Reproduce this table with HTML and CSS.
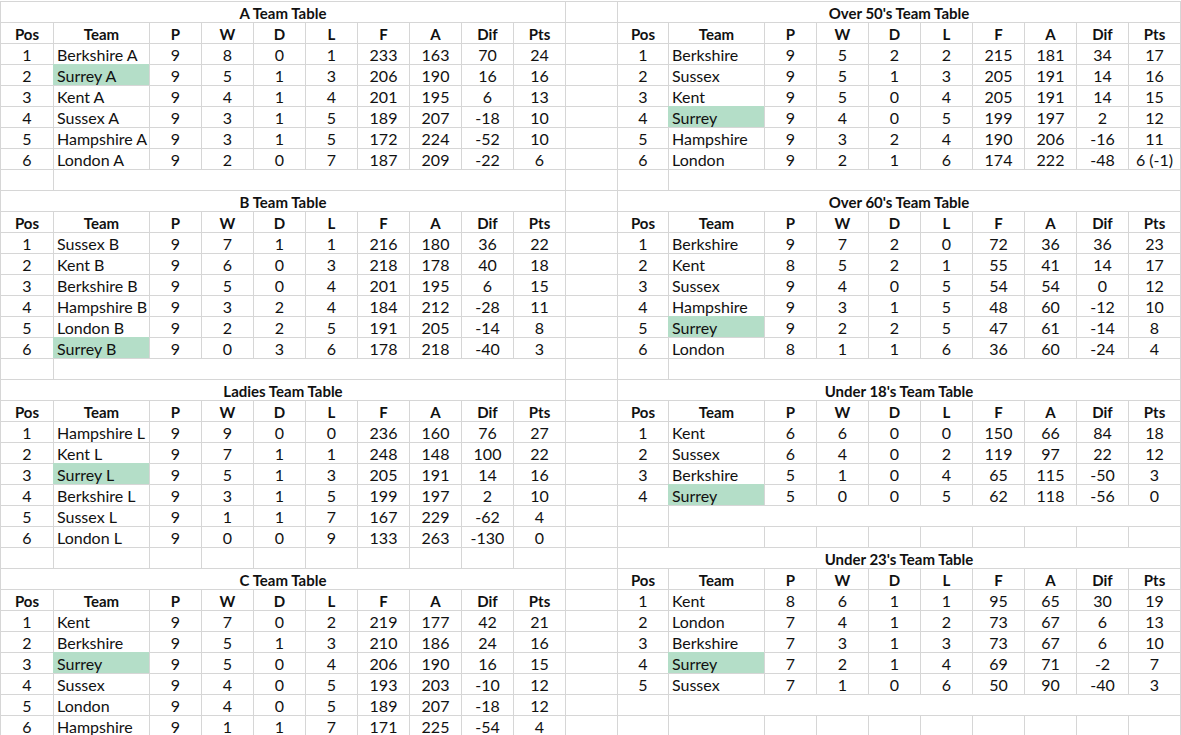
FILE: index.html
```html
<!DOCTYPE html>
<html lang="en">
<head>
<meta charset="utf-8">
<title>League Tables</title>
<link rel="stylesheet" href="styles.css">
</head>
<body>
<main class="sheet">
  <section class="side left">
    <div class="ttl">A Team Table</div>
    <div class="h">Pos</div><div class="h">Team</div><div class="h">P</div><div class="h">W</div><div class="h">D</div><div class="h">L</div><div class="h">F</div><div class="h">A</div><div class="h">Dif</div><div class="h">Pts</div>
    <div class="n">1</div><div class="t">Berkshire A</div><div class="n">9</div><div class="n">8</div><div class="n">0</div><div class="n">1</div><div class="n">233</div><div class="n">163</div><div class="n">70</div><div class="n">24</div>
    <div class="n">2</div><div class="t g">Surrey A</div><div class="n">9</div><div class="n">5</div><div class="n">1</div><div class="n">3</div><div class="n">206</div><div class="n">190</div><div class="n">16</div><div class="n">16</div>
    <div class="n">3</div><div class="t">Kent A</div><div class="n">9</div><div class="n">4</div><div class="n">1</div><div class="n">4</div><div class="n">201</div><div class="n">195</div><div class="n">6</div><div class="n">13</div>
    <div class="n">4</div><div class="t">Sussex A</div><div class="n">9</div><div class="n">3</div><div class="n">1</div><div class="n">5</div><div class="n">189</div><div class="n">207</div><div class="n">-18</div><div class="n">10</div>
    <div class="n">5</div><div class="t">Hampshire A</div><div class="n">9</div><div class="n">3</div><div class="n">1</div><div class="n">5</div><div class="n">172</div><div class="n">224</div><div class="n">-52</div><div class="n">10</div>
    <div class="n">6</div><div class="t">London A</div><div class="n">9</div><div class="n">2</div><div class="n">0</div><div class="n">7</div><div class="n">187</div><div class="n">209</div><div class="n">-22</div><div class="n">6</div>
    <div class="e"></div><div class="m"></div>

    <div class="ttl">B Team Table</div>
    <div class="h">Pos</div><div class="h">Team</div><div class="h">P</div><div class="h">W</div><div class="h">D</div><div class="h">L</div><div class="h">F</div><div class="h">A</div><div class="h">Dif</div><div class="h">Pts</div>
    <div class="n">1</div><div class="t">Sussex B</div><div class="n">9</div><div class="n">7</div><div class="n">1</div><div class="n">1</div><div class="n">216</div><div class="n">180</div><div class="n">36</div><div class="n">22</div>
    <div class="n">2</div><div class="t">Kent B</div><div class="n">9</div><div class="n">6</div><div class="n">0</div><div class="n">3</div><div class="n">218</div><div class="n">178</div><div class="n">40</div><div class="n">18</div>
    <div class="n">3</div><div class="t">Berkshire B</div><div class="n">9</div><div class="n">5</div><div class="n">0</div><div class="n">4</div><div class="n">201</div><div class="n">195</div><div class="n">6</div><div class="n">15</div>
    <div class="n">4</div><div class="t">Hampshire B</div><div class="n">9</div><div class="n">3</div><div class="n">2</div><div class="n">4</div><div class="n">184</div><div class="n">212</div><div class="n">-28</div><div class="n">11</div>
    <div class="n">5</div><div class="t">London B</div><div class="n">9</div><div class="n">2</div><div class="n">2</div><div class="n">5</div><div class="n">191</div><div class="n">205</div><div class="n">-14</div><div class="n">8</div>
    <div class="n">6</div><div class="t g">Surrey B</div><div class="n">9</div><div class="n">0</div><div class="n">3</div><div class="n">6</div><div class="n">178</div><div class="n">218</div><div class="n">-40</div><div class="n">3</div>
    <div class="e"></div><div class="m"></div>

    <div class="ttl">Ladies Team Table</div>
    <div class="h">Pos</div><div class="h">Team</div><div class="h">P</div><div class="h">W</div><div class="h">D</div><div class="h">L</div><div class="h">F</div><div class="h">A</div><div class="h">Dif</div><div class="h">Pts</div>
    <div class="n">1</div><div class="t">Hampshire L</div><div class="n">9</div><div class="n">9</div><div class="n">0</div><div class="n">0</div><div class="n">236</div><div class="n">160</div><div class="n">76</div><div class="n">27</div>
    <div class="n">2</div><div class="t">Kent L</div><div class="n">9</div><div class="n">7</div><div class="n">1</div><div class="n">1</div><div class="n">248</div><div class="n">148</div><div class="n">100</div><div class="n">22</div>
    <div class="n">3</div><div class="t g">Surrey L</div><div class="n">9</div><div class="n">5</div><div class="n">1</div><div class="n">3</div><div class="n">205</div><div class="n">191</div><div class="n">14</div><div class="n">16</div>
    <div class="n">4</div><div class="t">Berkshire L</div><div class="n">9</div><div class="n">3</div><div class="n">1</div><div class="n">5</div><div class="n">199</div><div class="n">197</div><div class="n">2</div><div class="n">10</div>
    <div class="n">5</div><div class="t">Sussex L</div><div class="n">9</div><div class="n">1</div><div class="n">1</div><div class="n">7</div><div class="n">167</div><div class="n">229</div><div class="n">-62</div><div class="n">4</div>
    <div class="n">6</div><div class="t">London L</div><div class="n">9</div><div class="n">0</div><div class="n">0</div><div class="n">9</div><div class="n">133</div><div class="n">263</div><div class="n">-130</div><div class="n">0</div>
    <div class="e"></div><div class="e"></div><div class="e"></div><div class="e"></div><div class="e"></div><div class="e"></div><div class="e"></div><div class="e"></div><div class="e"></div><div class="e"></div>

    <div class="ttl">C Team Table</div>
    <div class="h">Pos</div><div class="h">Team</div><div class="h">P</div><div class="h">W</div><div class="h">D</div><div class="h">L</div><div class="h">F</div><div class="h">A</div><div class="h">Dif</div><div class="h">Pts</div>
    <div class="n">1</div><div class="t">Kent</div><div class="n">9</div><div class="n">7</div><div class="n">0</div><div class="n">2</div><div class="n">219</div><div class="n">177</div><div class="n">42</div><div class="n">21</div>
    <div class="n">2</div><div class="t">Berkshire</div><div class="n">9</div><div class="n">5</div><div class="n">1</div><div class="n">3</div><div class="n">210</div><div class="n">186</div><div class="n">24</div><div class="n">16</div>
    <div class="n">3</div><div class="t g">Surrey</div><div class="n">9</div><div class="n">5</div><div class="n">0</div><div class="n">4</div><div class="n">206</div><div class="n">190</div><div class="n">16</div><div class="n">15</div>
    <div class="n">4</div><div class="t">Sussex</div><div class="n">9</div><div class="n">4</div><div class="n">0</div><div class="n">5</div><div class="n">193</div><div class="n">203</div><div class="n">-10</div><div class="n">12</div>
    <div class="n">5</div><div class="t">London</div><div class="n">9</div><div class="n">4</div><div class="n">0</div><div class="n">5</div><div class="n">189</div><div class="n">207</div><div class="n">-18</div><div class="n">12</div>
    <div class="n">6</div><div class="t">Hampshire</div><div class="n">9</div><div class="n">1</div><div class="n">1</div><div class="n">7</div><div class="n">171</div><div class="n">225</div><div class="n">-54</div><div class="n">4</div>
  </section>

  <section class="gap">
    <div class="e"></div><div class="e"></div><div class="e"></div><div class="e"></div><div class="e"></div><div class="e"></div><div class="e"></div>
    <div class="e"></div><div class="e"></div><div class="e"></div><div class="e"></div><div class="e"></div><div class="e"></div><div class="e"></div>
    <div class="e"></div><div class="e"></div><div class="e"></div><div class="e"></div><div class="e"></div><div class="e"></div><div class="e"></div>
    <div class="e"></div><div class="e"></div><div class="e"></div><div class="e"></div><div class="e"></div><div class="e"></div><div class="e"></div>
    <div class="e"></div><div class="e"></div><div class="e"></div><div class="e"></div><div class="e"></div><div class="e"></div><div class="e"></div>
  </section>

  <section class="side right">
    <div class="ttl">Over 50's Team Table</div>
    <div class="h">Pos</div><div class="h">Team</div><div class="h">P</div><div class="h">W</div><div class="h">D</div><div class="h">L</div><div class="h">F</div><div class="h">A</div><div class="h">Dif</div><div class="h">Pts</div>
    <div class="n">1</div><div class="t">Berkshire</div><div class="n">9</div><div class="n">5</div><div class="n">2</div><div class="n">2</div><div class="n">215</div><div class="n">181</div><div class="n">34</div><div class="n">17</div>
    <div class="n">2</div><div class="t">Sussex</div><div class="n">9</div><div class="n">5</div><div class="n">1</div><div class="n">3</div><div class="n">205</div><div class="n">191</div><div class="n">14</div><div class="n">16</div>
    <div class="n">3</div><div class="t">Kent</div><div class="n">9</div><div class="n">5</div><div class="n">0</div><div class="n">4</div><div class="n">205</div><div class="n">191</div><div class="n">14</div><div class="n">15</div>
    <div class="n">4</div><div class="t g">Surrey</div><div class="n">9</div><div class="n">4</div><div class="n">0</div><div class="n">5</div><div class="n">199</div><div class="n">197</div><div class="n">2</div><div class="n">12</div>
    <div class="n">5</div><div class="t">Hampshire</div><div class="n">9</div><div class="n">3</div><div class="n">2</div><div class="n">4</div><div class="n">190</div><div class="n">206</div><div class="n">-16</div><div class="n">11</div>
    <div class="n">6</div><div class="t">London</div><div class="n">9</div><div class="n">2</div><div class="n">1</div><div class="n">6</div><div class="n">174</div><div class="n">222</div><div class="n">-48</div><div class="n">6 (-1)</div>
    <div class="e"></div><div class="m"></div>

    <div class="ttl">Over 60's Team Table</div>
    <div class="h">Pos</div><div class="h">Team</div><div class="h">P</div><div class="h">W</div><div class="h">D</div><div class="h">L</div><div class="h">F</div><div class="h">A</div><div class="h">Dif</div><div class="h">Pts</div>
    <div class="n">1</div><div class="t">Berkshire</div><div class="n">9</div><div class="n">7</div><div class="n">2</div><div class="n">0</div><div class="n">72</div><div class="n">36</div><div class="n">36</div><div class="n">23</div>
    <div class="n">2</div><div class="t">Kent</div><div class="n">8</div><div class="n">5</div><div class="n">2</div><div class="n">1</div><div class="n">55</div><div class="n">41</div><div class="n">14</div><div class="n">17</div>
    <div class="n">3</div><div class="t">Sussex</div><div class="n">9</div><div class="n">4</div><div class="n">0</div><div class="n">5</div><div class="n">54</div><div class="n">54</div><div class="n">0</div><div class="n">12</div>
    <div class="n">4</div><div class="t">Hampshire</div><div class="n">9</div><div class="n">3</div><div class="n">1</div><div class="n">5</div><div class="n">48</div><div class="n">60</div><div class="n">-12</div><div class="n">10</div>
    <div class="n">5</div><div class="t g">Surrey</div><div class="n">9</div><div class="n">2</div><div class="n">2</div><div class="n">5</div><div class="n">47</div><div class="n">61</div><div class="n">-14</div><div class="n">8</div>
    <div class="n">6</div><div class="t">London</div><div class="n">8</div><div class="n">1</div><div class="n">1</div><div class="n">6</div><div class="n">36</div><div class="n">60</div><div class="n">-24</div><div class="n">4</div>
    <div class="e"></div><div class="m"></div>

    <div class="ttl">Under 18's Team Table</div>
    <div class="h">Pos</div><div class="h">Team</div><div class="h">P</div><div class="h">W</div><div class="h">D</div><div class="h">L</div><div class="h">F</div><div class="h">A</div><div class="h">Dif</div><div class="h">Pts</div>
    <div class="n">1</div><div class="t">Kent</div><div class="n">6</div><div class="n">6</div><div class="n">0</div><div class="n">0</div><div class="n">150</div><div class="n">66</div><div class="n">84</div><div class="n">18</div>
    <div class="n">2</div><div class="t">Sussex</div><div class="n">6</div><div class="n">4</div><div class="n">0</div><div class="n">2</div><div class="n">119</div><div class="n">97</div><div class="n">22</div><div class="n">12</div>
    <div class="n">3</div><div class="t">Berkshire</div><div class="n">5</div><div class="n">1</div><div class="n">0</div><div class="n">4</div><div class="n">65</div><div class="n">115</div><div class="n">-50</div><div class="n">3</div>
    <div class="n">4</div><div class="t g">Surrey</div><div class="n">5</div><div class="n">0</div><div class="n">0</div><div class="n">5</div><div class="n">62</div><div class="n">118</div><div class="n">-56</div><div class="n">0</div>
    <div class="e"></div><div class="m"></div>
    <div class="e"></div><div class="e"></div><div class="e"></div><div class="e"></div><div class="e"></div><div class="e"></div><div class="e"></div><div class="e"></div><div class="e"></div><div class="e"></div>

    <div class="ttl">Under 23's Team Table</div>
    <div class="h">Pos</div><div class="h">Team</div><div class="h">P</div><div class="h">W</div><div class="h">D</div><div class="h">L</div><div class="h">F</div><div class="h">A</div><div class="h">Dif</div><div class="h">Pts</div>
    <div class="n">1</div><div class="t">Kent</div><div class="n">8</div><div class="n">6</div><div class="n">1</div><div class="n">1</div><div class="n">95</div><div class="n">65</div><div class="n">30</div><div class="n">19</div>
    <div class="n">2</div><div class="t">London</div><div class="n">7</div><div class="n">4</div><div class="n">1</div><div class="n">2</div><div class="n">73</div><div class="n">67</div><div class="n">6</div><div class="n">13</div>
    <div class="n">3</div><div class="t">Berkshire</div><div class="n">7</div><div class="n">3</div><div class="n">1</div><div class="n">3</div><div class="n">73</div><div class="n">67</div><div class="n">6</div><div class="n">10</div>
    <div class="n">4</div><div class="t g">Surrey</div><div class="n">7</div><div class="n">2</div><div class="n">1</div><div class="n">4</div><div class="n">69</div><div class="n">71</div><div class="n">-2</div><div class="n">7</div>
    <div class="n">5</div><div class="t">Sussex</div><div class="n">7</div><div class="n">1</div><div class="n">0</div><div class="n">6</div><div class="n">50</div><div class="n">90</div><div class="n">-40</div><div class="n">3</div>
    <div class="e"></div><div class="m"></div>
    <div class="e"></div><div class="e"></div><div class="e"></div><div class="e"></div><div class="e"></div><div class="e"></div><div class="e"></div><div class="e"></div><div class="e"></div><div class="e"></div>
  </section>
</main>
</body>
</html>
```

FILE: styles.css
```css
* {
  box-sizing: border-box;
}

html, body {
  margin: 0;
  padding: 0;
  background: #ffffff;
}

body {
  padding-top: 1px;
  font-family: Lato, "Liberation Sans", sans-serif;
  font-size: 16px;
  color: #111111;
  overflow: hidden;
}

.sheet {
  display: flex;
  width: 1181px;
  border-right: 1px solid #d6d6d6;
}

.side {
  display: grid;
  grid-auto-rows: 21px;
}

.left {
  grid-template-columns: 53px 96px repeat(8, 52px);
}

.right {
  grid-template-columns: 51px 96px repeat(8, 52px);
}

.gap {
  display: grid;
  grid-template-columns: 52px;
  grid-auto-rows: 21px;
}

.side > div,
.gap > div {
  border-top: 1px solid #d6d6d6;
  border-left: 1px solid #d6d6d6;
  line-height: 20px;
  padding-top: 1px;
  white-space: nowrap;
  overflow: visible;
}

.ttl {
  grid-column: span 10;
  text-align: center;
  font-weight: 700;
  font-size: 15px;
}

.h {
  text-align: center;
  font-weight: 700;
  font-size: 15px;
}

.n {
  text-align: center;
}

.t {
  text-align: left;
  padding-left: 3px;
}

.g {
  background: #b4dec8;
  border-top-color: #b4dec8 !important;
  border-left-color: #b4dec8 !important;
}

.m {
  grid-column: span 9;
}
```
